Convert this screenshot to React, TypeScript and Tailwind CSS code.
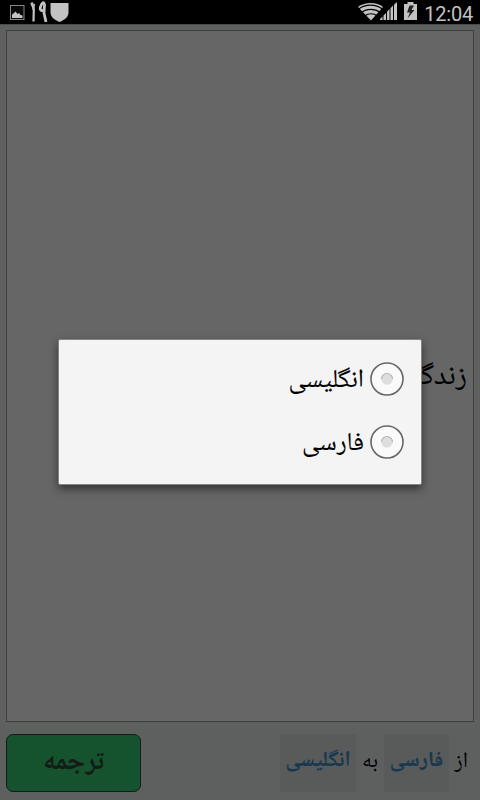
import clsx from "clsx";

const arabic = "font-['Noto_Naskh_Arabic_UI','Noto_Naskh_Arabic','DejaVu_Sans',sans-serif]";

const StatusBar = () => (
  <header className="flex h-6 shrink-0 items-center bg-black text-[#c2c2c2]">
    <svg className="ml-[9px] h-6 w-[17px]" viewBox="0 0 17 24">
      <rect x="1.500" y="5.500" width="13.500" height="14" fill="#080808" stroke="#888" />
      <path d="M3 18v-3.500l1.500-1 2-2 2 2.500 1.500-1 1.500 2 2 .5V18z" fill="#c2c2c2" />
    </svg>
    <svg className="ml-1 h-6 w-[18px]" viewBox="0 0 18 24" fill="none" stroke="currentColor">
      <path d="M2 2.500l1.800 7-.3 12" strokeWidth="2.200" />
      <path d="M1 3l2 5M4.500 4L3 10" strokeWidth="1.500" />
      <path d="M14.500 9.500c-2.500 2.500-5 .5-4-2.500C11.500 3 14 .5 14.500 5l-.5 8 2 9" strokeWidth="2.800" />
    </svg>
    <svg className="ml-[2px] h-6 w-[19px]" viewBox="0 0 19 24">
      <path d="M.5 3h18v9.500c0 4.500-4 7.500-9 9.500-5-2-9-5-9-9.500z" fill="#c2c2c2" />
    </svg>
    <div className="ml-auto flex items-center">
      <svg className="h-6 w-[42px]" viewBox="-2 0 42 24">
        <path d="M-1 7C5.500 1.500 18 1.500 24 7L12 20.500z" fill="#c2c2c2" />
        <g fill="none" stroke="#000" strokeWidth="1.200">
          <path d="M0 8.800c6-5 17-5 23 0" />
          <path d="M3 12.300c4.500-4 13-4 18 0" />
          <path d="M6 15.700c3-2.600 9-2.600 12 0" />
        </g>
        <g fill="#c2c2c2">
          <path d="M21 19l2.500-2.500V20H21zM24.500 15.500l2.500-2.500v7h-2.500zM28 11.800L30.500 9v11H28zM31.500 8.200L34 5.600V20h-2.500zM35 4.700L38 2v18h-3z" />
        </g>
      </svg>
      <svg className="ml-[5px] h-6 w-[13px]" viewBox="0 0 13 24">
        <path d="M3.500 2h6v2H13v16H0V4h3.500z" fill="#c2c2c2" />
        <path d="M10 5.500H5.500L3 12.500h3l-2.500 6 7-8.500H7.500z" fill="#222" />
      </svg>
      <span className="ml-[7px] mr-[7px] pt-1 font-[Roboto] text-[20px] leading-6 tracking-[-0.2px]">
        12:04
      </span>
    </div>
  </header>
);

const languages = [
  { label: "انگلیسی", id: "en" },
  { label: "فارسی", id: "fa" },
];

const Radio = () => (
  <svg className="size-[34px] shrink-0" viewBox="0 0 34 34">
    <circle cx="17" cy="17" r="16" fill="#fafafa" stroke="#666" strokeWidth="1.600" />
    <circle cx="17" cy="17" r="5.800" fill="#dedede" />
    <path d="M11.500 17a5.500 5.500 0 0 1 11 0" fill="none" stroke="#b5b5b5" strokeWidth="1.200" />
  </svg>
);

const LanguageDialog = () => (
  <div
    dir="rtl"
    className="absolute left-[58px] top-[339px] flex h-[146px] w-[364px] flex-col rounded-[2px] border border-[#858585] bg-[#f4f4f4] pt-[7px] shadow-[0_4px_9px_0_rgba(0,0,0,0.5)]"
  >
    {languages.map(lang => (
      <div key={lang.id} className="flex h-[63px] items-center pr-[17px]">
        <Radio />
        <span className="mr-[6px] pt-[3px] text-[25.8px] leading-[40px] text-black [-webkit-text-stroke:0.12px_black]">
          {lang.label}
        </span>
      </div>
    ))}
  </div>
);

const LanguageButton = ({ label, className }: { label: string; className: string }) => (
  <button
    className={clsx(
      "h-[58px] bg-[#595b5a] pb-[4px] text-center text-[21.6px] font-bold text-[#18384f] [-webkit-text-stroke:0.15px_#18384f]",
      className
    )}
  >
    {label}
  </button>
);

export default function App() {
  return (
    <div className={clsx("relative flex h-[800px] w-[480px] flex-col overflow-hidden bg-[#5d605f]", arabic)}>
      <StatusBar />
      <main className="flex flex-1 flex-col border-t border-[#484a49] px-[6px] pt-[5px]">
        <div
          dir="rtl"
          className="flex h-[692px] items-center border border-[#3b3e3d] bg-[#666] pr-[6px] pt-[2px] text-[29px] text-black [-webkit-text-stroke:0.12px_black]"
        >
          زندگی
        </div>
        <div dir="rtl" className="mt-3 flex h-[58px] items-center text-[22px] text-black">
          <span className="mr-[6px] w-[19px] pb-[4px]">از</span>
          <LanguageButton label="فارسی" className="w-[65px]" />
          <span className="w-[28px] pb-[4px] text-center">به</span>
          <LanguageButton label="انگلیسی" className="w-[76px]" />
          <button className="mr-auto h-[58px] w-[135px] rounded-[7px] border border-[#151b17] bg-[#14532d] text-[27.8px] font-bold text-[#151b17]">
            ترجمه
          </button>
        </div>
      </main>
      <LanguageDialog />
    </div>
  );
}
